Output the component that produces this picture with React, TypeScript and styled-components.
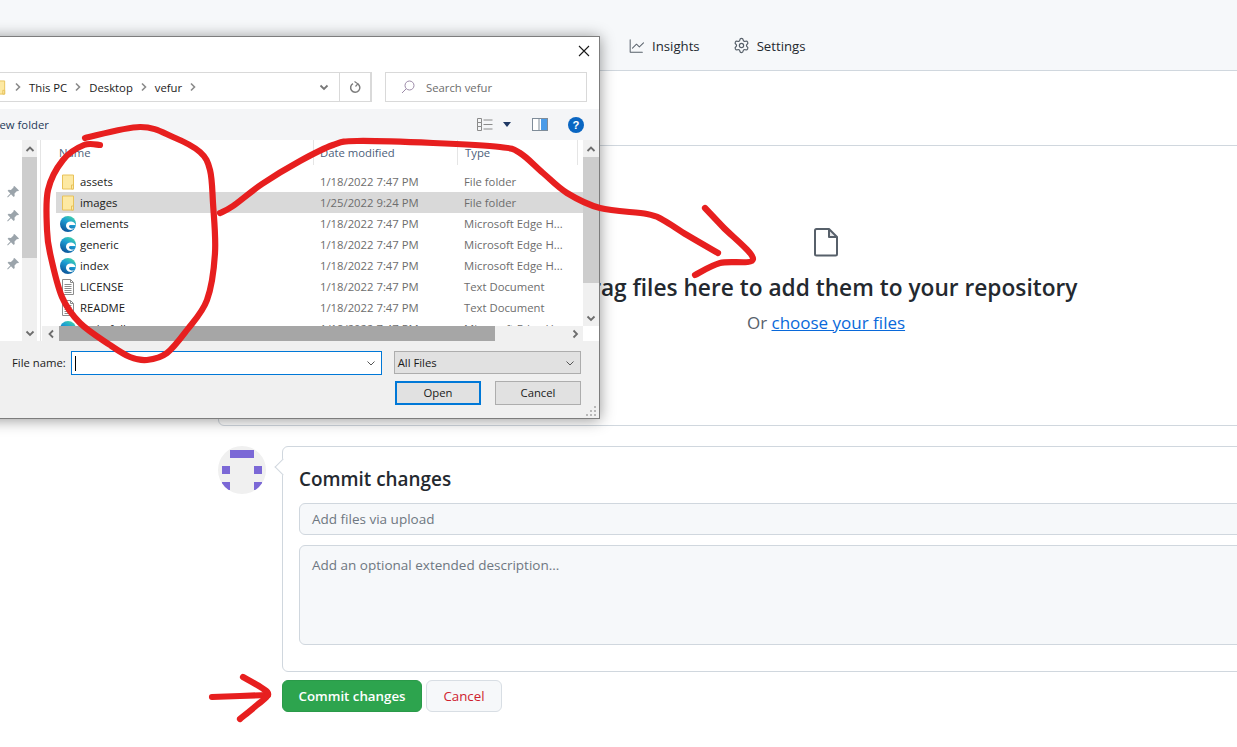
import React from "react"
import styled, { createGlobalStyle } from "styled-components"
import { GoGraph } from "react-icons/go"
import { Settings } from "lucide-react"

const GlobalStyle = createGlobalStyle`
  html, body {
    margin: 0;
    padding: 0;
    height: 100%;
    overflow: hidden;
    background: #ffffff;
  }
  * {
    box-sizing: border-box;
  }
`

const gitHubFont = `"Open Sans", "Noto Sans", sans-serif`

const Page = styled.div`
  position: relative;
  width: 1237px;
  height: 747px;
  overflow: hidden;
  font-family: ${gitHubFont};
  color: #24292f;
`

const RepoNav = styled.nav`
  display: flex;
  align-items: center;
  gap: 33px;
  height: 71px;
  padding: 21px 0 0 629px;
  background: #f6f8fa;
  border-bottom: 1px solid #d0d7de;
`

const NavItem = styled.div`
  display: flex;
  align-items: center;
  gap: 7px;
  font-size: 13.2px;
  line-height: 20px;
  white-space: nowrap;

  svg {
    color: #57606a;
    flex: none;
  }
`

const Main = styled.main`
  display: flex;
  flex-direction: column;
  width: 1216px;
  margin-left: 218px;
  padding-top: 74px;
`

const DropZone = styled.section`
  display: flex;
  flex-direction: column;
  align-items: center;
  height: 281px;
  padding-top: 81px;
  border: 1px solid #d0d7de;
  border-radius: 6px;
  margin-bottom: 20px;
`

const DropTitle = styled.h2`
  margin: 15px 0 0;
  font-size: 22.7px;
  line-height: 32px;
  font-weight: 600;
  white-space: nowrap;
`

const DropHint = styled.p`
  margin: 7px 0 0;
  font-size: 17px;
  line-height: 24px;
  color: #57606a;
`

const ChooseLink = styled.a`
  color: #0969da;
  text-decoration: underline;
`

const CommitRow = styled.div`
  display: flex;
  gap: 16px;
`

const Avatar = styled.svg`
  flex: none;
  width: 48px;
  height: 48px;
  border-radius: 50%;
  background: #f0f0f0;
`

const CommitBox = styled.form`
  position: relative;
  flex: 1;
  height: 226px;
  padding: 16px;
  border: 1px solid #d0d7de;
  border-radius: 6px;

  &::before {
    content: "";
    position: absolute;
    top: 14px;
    left: -6px;
    width: 11px;
    height: 11px;
    background: #ffffff;
    border-left: 1px solid #d0d7de;
    border-bottom: 1px solid #d0d7de;
    transform: rotate(45deg);
  }
`

const CommitTitle = styled.h3`
  margin: 0 0 8px;
  font-size: 18.9px;
  line-height: 32px;
  font-weight: 600;
`

const Field = styled.div<{ $tall?: boolean }>`
  height: ${(props) => (props.$tall ? "100px" : "32px")};
  margin-bottom: 10px;
  padding: 5px 12px;
  background: #f6f8fa;
  border: 1px solid #d0d7de;
  border-radius: 6px;
  font-size: 13.5px;
  line-height: ${(props) => (props.$tall ? "28px" : "20px")};
  color: #6e7781;
`

const Actions = styled.div`
  display: flex;
  gap: 4px;
  margin: 8px 0 0 64px;
`

const Button = styled.button<{ $primary?: boolean }>`
  height: 32px;
  width: ${(props) => (props.$primary ? "140px" : "76px")};
  padding: 0;
  font-family: ${gitHubFont};
  font-size: 13.3px;
  font-weight: ${(props) => (props.$primary ? 600 : 500)};
  color: ${(props) => (props.$primary ? "#ffffff" : "#cf222e")};
  background: ${(props) => (props.$primary ? "#2da44e" : "#f6f8fa")};
  border: 1px solid ${(props) => (props.$primary ? "#2a9a49" : "#d8dee4")};
  border-radius: 6px;
`

/* Windows file picker */

const winFont = `"Open Sans", "Noto Sans", sans-serif`

const Dialog = styled.div`
  position: absolute;
  top: 36px;
  left: -20px;
  display: flex;
  flex-direction: column;
  width: 620px;
  height: 383px;
  background: #ffffff;
  border: 1px solid #7d7d7d;
  box-shadow: 0 1px 14px rgba(0, 0, 0, 0.42);
  font-family: ${winFont};
  font-size: 11.3px;
  color: #1a1a1a;
`

const TitleBar = styled.div`
  display: flex;
  align-items: center;
  justify-content: flex-end;
  height: 35px;
  padding: 0 9px 7px 0;
  flex: none;
`

const AddressRow = styled.div`
  display: flex;
  height: 30px;
  flex: none;
`

const AddressBox = styled.div`
  display: flex;
  align-items: center;
  gap: 7px;
  width: 391px;
  padding-left: 11px;
  border-style: solid;
  border-color: #d9d9d9;
  border-width: 1px 2px 1px 0;
`

const Crumb = styled.span`
  white-space: nowrap;
`

const AddressEnd = styled.div`
  display: flex;
  align-items: center;
  height: 100%;
  margin-left: auto;
`

const AddressButton = styled.div<{ $divided?: boolean }>`
  display: flex;
  align-items: center;
  justify-content: center;
  height: 100%;
  width: ${(props) => (props.$divided ? "31px" : "30px")};
  border-left: ${(props) => (props.$divided ? "1px solid #d9d9d9" : "none")};
`

const SearchBox = styled.div`
  display: flex;
  align-items: center;
  gap: 11px;
  width: 202px;
  margin-left: 13px;
  padding-left: 15px;
  border: 1px solid #d9d9d9;
  color: #6d6d6d;
`

const Toolbar = styled.div`
  display: flex;
  align-items: center;
  height: 31px;
  margin-top: 7px;
  padding-left: 19px;
  background: #f4f5f7;
  flex: none;
  color: #243a5a;
`

const NewFolder = styled.span`
  margin-left: -9px;
  white-space: nowrap;
`

const ToolIcons = styled.div`
  display: flex;
  align-items: center;
  margin-left: auto;
  padding-right: 15px;
`

const Browser = styled.div`
  display: flex;
  height: 201px;
  flex: none;
`

const Sidebar = styled.div`
  display: flex;
  width: 60px;
  flex: none;
  border-right: 1px solid #e5e5e5;
  padding-right: 3px;
`

const Pins = styled.div`
  display: flex;
  flex-direction: column;
  align-items: flex-end;
  gap: 8px;
  width: 41px;
  padding: 44px 1px 0 0;
`

const ScrollTrack = styled.div<{ $width: number }>`
  display: flex;
  flex-direction: column;
  justify-content: space-between;
  width: ${(props) => props.$width}px;
  flex: none;
  background: #f0f0f0;
  position: relative;
`

const ScrollArrow = styled.div`
  display: flex;
  align-items: center;
  justify-content: center;
  height: 17px;
  flex: none;
`

const ScrollThumb = styled.div<{ $size: number }>`
  height: ${(props) => props.$size}px;
  background: #cdcdcd;
  flex: none;
`

const ScrollTop = styled.div`
  display: flex;
  flex-direction: column;
`

const ListArea = styled.div`
  display: flex;
  flex-direction: column;
  flex: 1;
  min-width: 0;
`

const ListTop = styled.div`
  display: flex;
  height: 186px;
`

const List = styled.div`
  flex: 1;
  padding-left: 15px;
  overflow: hidden;
`

const HeaderRow = styled.div`
  display: grid;
  grid-template-columns: 258px 144px 120px;
  height: 25px;
  margin-bottom: 6px;
  color: #4c607a;
`

const HeaderCell = styled.div<{ $pad: number }>`
  padding: 5px 0 0 ${(props) => props.$pad}px;
  border-right: 1px solid #e5e5e5;
  white-space: nowrap;
`

const FileRow = styled.div<{ $selected?: boolean }>`
  display: grid;
  grid-template-columns: 264px 144px 1fr;
  align-items: center;
  height: 21px;
  background: ${(props) => (props.$selected ? "#d9d9d9" : "transparent")};
  white-space: nowrap;
`

const FileName = styled.div`
  display: flex;
  align-items: center;
  gap: 4px;
  padding-left: 4px;
`

const FileMeta = styled.div`
  color: #6d6d6d;
`

const HScroll = styled.div`
  display: flex;
  align-items: center;
  height: 15px;
  flex: none;
`

const HTrack = styled.div`
  display: flex;
  align-items: center;
  width: 541px;
  height: 100%;
  margin-left: 1px;
  background: #f0f0f0;
`

const HArrow = styled.div<{ $end?: boolean }>`
  display: flex;
  align-items: center;
  justify-content: center;
  width: 17px;
  height: 100%;
  margin-left: ${(props) => (props.$end ? "auto" : "0")};
`

const HThumb = styled.div`
  width: 436px;
  height: 100%;
  background: #a6a6a6;
`

const Footer = styled.div`
  position: relative;
  flex: 1;
  display: flex;
  flex-direction: column;
  padding: 10px 18px 0 31px;
  background: #f0f0f0;
`

const NameRow = styled.div`
  display: flex;
  align-items: flex-start;
`

const NameLabel = styled.label`
  width: 59px;
  line-height: 24px;
  white-space: nowrap;
`

const NameInput = styled.div`
  display: flex;
  align-items: center;
  justify-content: space-between;
  width: 312px;
  height: 24px;
  padding: 0 5px 0 3px;
  background: #ffffff;
  border: 1px solid #0078d7;
`

const Caret = styled.span`
  width: 1px;
  height: 15px;
  background: #000000;
`

const TypeSelect = styled.div`
  display: flex;
  align-items: center;
  justify-content: space-between;
  width: 188px;
  height: 23px;
  margin-left: 12px;
  padding: 0 5px 0 3px;
  background: #e1e1e1;
  border: 1px solid #adadad;
`

const DialogActions = styled.div`
  display: flex;
  justify-content: flex-end;
  gap: 14px;
  margin-top: 6px;
`

const WinButton = styled.div<{ $focused?: boolean }>`
  display: flex;
  align-items: center;
  justify-content: center;
  width: 86px;
  height: 24px;
  padding-bottom: 1px;
  background: #e1e1e1;
  border: ${(props) => (props.$focused ? "2px solid #0078d7" : "1px solid #adadad")};
`

const Grip = styled.svg`
  position: absolute;
  right: 1px;
  bottom: 1px;
`

const Annotations = styled.svg`
  position: absolute;
  top: 0;
  left: 0;
  pointer-events: none;
`

/* Smooth line through the hand drawn points */
function scribble(points: number[][]): string {
  let d = `M${points[0][0]} ${points[0][1]}`
  for (let i = 0; i < points.length - 1; i++) {
    const p0 = points[Math.max(i - 1, 0)]
    const p1 = points[i]
    const p2 = points[i + 1]
    const p3 = points[Math.min(i + 2, points.length - 1)]
    const c1x = p1[0] + (p2[0] - p0[0]) / 6
    const c1y = p1[1] + (p2[1] - p0[1]) / 6
    const c2x = p2[0] - (p3[0] - p1[0]) / 6
    const c2y = p2[1] - (p3[1] - p1[1]) / 6
    d += `C${c1x} ${c1y} ${c2x} ${c2y} ${p2[0]} ${p2[1]}`
  }
  return d
}

const strokes = [
  [
    [100, 145], [84, 145], [63, 160], [48, 190], [47, 230], [50, 253], [62, 297], [80, 323],
    [110, 345], [130, 357], [147, 360], [167, 353], [187, 330], [207, 300], [215, 253],
    [213, 203], [210, 170], [200, 152], [173, 137], [140, 127], [85, 138],
  ],
  [
    [220, 213], [233, 206], [262, 184], [300, 161], [333, 145], [357, 141], [433, 143], [500, 147],
    [520, 153], [543, 173], [567, 193], [600, 208], [647, 214], [663, 220], [687, 235], [718, 253],
  ],
  [[705, 208], [723, 227], [753, 259], [720, 263], [695, 275]],
  [[212, 697], [268, 695]],
  [[243, 677], [262, 688], [268, 695], [257, 705], [240, 719]],
]

const files = [
  { name: "assets", date: "1/18/2022 7:47 PM", type: "File folder", icon: "folder" },
  { name: "images", date: "1/25/2022 9:24 PM", type: "File folder", icon: "folder", selected: true },
  { name: "elements", date: "1/18/2022 7:47 PM", type: "Microsoft Edge H...", icon: "edge" },
  { name: "generic", date: "1/18/2022 7:47 PM", type: "Microsoft Edge H...", icon: "edge" },
  { name: "index", date: "1/18/2022 7:47 PM", type: "Microsoft Edge H...", icon: "edge" },
  { name: "LICENSE", date: "1/18/2022 7:47 PM", type: "Text Document", icon: "text" },
  { name: "README", date: "1/18/2022 7:47 PM", type: "Text Document", icon: "text" },
  { name: "main.full", date: "1/18/2022 7:47 PM", type: "Microsoft Edge H...", icon: "edge" },
]

function FolderIcon({ size = 16 }: { size?: number }) {
  return (
    <svg width={size} height={size} viewBox="0 0 16 16">
      <path d="M2.5 1h11v14h-11z" fill="#fde9a3" stroke="#e8c25a" />
      <path d="M11.5 15v-4h2v4z" fill="#fbe9a9" stroke="#e8c25a" />
    </svg>
  )
}

function EdgeIcon() {
  return (
    <svg width={16} height={16} viewBox="0 0 16 16">
      <defs>
        <linearGradient id="edgeFill" x1="0.8" y1="0" x2="0.25" y2="1">
          <stop offset="0" stopColor="#45d6a4" />
          <stop offset="0.4" stopColor="#1c9fd4" />
          <stop offset="1" stopColor="#0b4f96" />
        </linearGradient>
      </defs>
      <circle cx="8" cy="8" r="8" fill="url(#edgeFill)" />
      <path d="M6 9.500C6 6.500 9 5 11.500 5.500 14 6 15.500 8 15.500 9L10.500 9C9 9 8.500 10.500 9.500 11.500 10.500 12.500 12.500 13 14.300 12 13 14 10.500 14.500 8.500 13.500 6.800 12.700 6 11.200 6 9.500Z" fill="#ffffff" />
    </svg>
  )
}

function TextIcon() {
  return (
    <svg width={16} height={16} viewBox="0 0 16 16" fill="none" stroke="#8c8c8c">
      <path d="M2.5 0.5h8l3 3v12h-11z" fill="#ffffff" />
      <path d="M10.5 0.500v3h3" />
      <path d="M4.500 5.500h7M4.500 7.500h7M4.500 9.500h7M4.500 11.500h7M4.500 13.500h7" />
    </svg>
  )
}

function FileIcon({ kind }: { kind: string }) {
  if (kind === "folder") return <FolderIcon />
  if (kind === "edge") return <EdgeIcon />
  return <TextIcon />
}

function ChevronRight() {
  return (
    <svg width={8} height={10} viewBox="0 0 8 10" fill="none" stroke="#8a8a8a" strokeWidth="1.6" style={{ flex: "none" }}>
      <path d="M2 1.5L5.5 5 2 8.5" />
    </svg>
  )
}

function Chevron({ dir, color = "#6d6d6d", width = 1.8 }: { dir: "up" | "down" | "left" | "right"; color?: string; width?: number }) {
  const shapes = {
    up: "M1.5 7L5 3.5 8.5 7",
    down: "M1.5 3.5L5 7 8.5 3.5",
    left: "M7 1.5L3.5 5 7 8.5",
    right: "M3.5 1.5L7 5 3.5 8.5",
  }
  return (
    <svg width={10} height={10} viewBox="0 0 10 10" fill="none" stroke={color} strokeWidth={width}>
      <path d={shapes[dir]} />
    </svg>
  )
}

function Pin() {
  return (
    <svg width={16} height={16} viewBox="0 0 16 16" fill="#9ba4ab">
      <path d="M9.500 2l4.500 4.500-1 .8-1-.3-2.500 2.600.2 2.300-1 1L6 10.200 2.800 13.400 2.200 12.800 5.300 9.500 2.600 6.800l1-1 2.300.2L8.500 3.400 8.300 2.800z" />
    </svg>
  )
}

function FilePicker() {
  return (
    <Dialog>
      <TitleBar>
        <svg width={12} height={12} viewBox="0 0 12 12" stroke="#1a1a1a" strokeWidth="1.1">
          <path d="M1 1l10 10M11 1L1 11" />
        </svg>
      </TitleBar>
      <AddressRow>
        <AddressBox>
          <FolderIcon size={15} />
          <ChevronRight />
          <Crumb>This PC</Crumb>
          <ChevronRight />
          <Crumb>Desktop</Crumb>
          <ChevronRight />
          <Crumb>vefur</Crumb>
          <ChevronRight />
          <AddressEnd>
            <AddressButton>
              <Chevron dir="down" color="#777777" />
            </AddressButton>
            <AddressButton $divided>
              <svg width={13} height={13} viewBox="0 0 13 13" fill="none" stroke="#7d7d7d" strokeWidth="1.5">
                <path d="M8.800 2.800A4.600 4.600 0 1 1 4 2.600" />
                <path d="M5.500 0.500L8.800 2.800 6.500 5.500" strokeWidth="1.2" />
              </svg>
            </AddressButton>
          </AddressEnd>
        </AddressBox>
        <SearchBox>
          <svg width={14} height={14} viewBox="0 0 14 14" fill="none" stroke="#9c8aa8" strokeWidth="1">
            <circle cx="8.500" cy="5.500" r="4.500" />
            <path d="M5.200 8.800L1 13" />
          </svg>
          <span>Search vefur</span>
        </SearchBox>
      </AddressRow>
      <Toolbar>
        <NewFolder>New folder</NewFolder>
        <ToolIcons>
          <svg width={16} height={14} viewBox="0 0 16 14" fill="none" stroke="#8a8a8a">
            <path d="M0.500 0.500h4v4h-4zM0.500 4.500h4v4h-4zM0.500 8.500h4v4h-4zM6.500 2h9M6.500 6.500h9M6.500 11h9" />
          </svg>
          <svg width={8} height={5} viewBox="0 0 8 5" style={{ margin: "0 21px 0 10px" }}>
            <path d="M0 0h8L4 5z" fill="#1f3864" />
          </svg>
          <svg width={16} height={13} viewBox="0 0 16 13" style={{ marginRight: 20 }}>
            <rect x="0.500" y="0.500" width="15" height="12" fill="#ffffff" stroke="#7f8c99" />
            <rect x="9" y="1" width="6" height="11" fill="#4a9be8" />
            <path d="M7 1v11" stroke="#7f8c99" />
          </svg>
          <svg width={16} height={16} viewBox="0 0 17 17">
            <circle cx="8.500" cy="8.500" r="8.500" fill="#0a66c2" />
            <text x="8.500" y="13" textAnchor="middle" fontSize="12" fontWeight="700" fill="#ffffff" fontFamily="Liberation Sans, sans-serif">?</text>
          </svg>
        </ToolIcons>
      </Toolbar>
      <Browser>
        <Sidebar>
          <Pins>
            <Pin />
            <Pin />
            <Pin />
            <Pin />
          </Pins>
          <ScrollTrack $width={15}>
            <ScrollTop>
              <ScrollArrow>
                <Chevron dir="up" />
              </ScrollArrow>
              <ScrollThumb $size={101} />
            </ScrollTop>
            <ScrollArrow>
              <Chevron dir="down" />
            </ScrollArrow>
          </ScrollTrack>
        </Sidebar>
        <ListArea>
          <ListTop>
            <List>
              <HeaderRow>
                <HeaderCell $pad={3}>Name</HeaderCell>
                <HeaderCell $pad={6}>Date modified</HeaderCell>
                <HeaderCell $pad={7}>Type</HeaderCell>
              </HeaderRow>
              {files.map((file) => (
                <FileRow key={file.name} $selected={file.selected}>
                  <FileName>
                    <FileIcon kind={file.icon} />
                    <span>{file.name}</span>
                  </FileName>
                  <FileMeta>{file.date}</FileMeta>
                  <FileMeta>{file.type}</FileMeta>
                </FileRow>
              ))}
            </List>
            <ScrollTrack $width={16}>
              <ScrollTop>
                <ScrollArrow>
                  <Chevron dir="up" />
                </ScrollArrow>
                <ScrollThumb $size={126} />
              </ScrollTop>
              <ScrollArrow>
                <Chevron dir="down" />
              </ScrollArrow>
            </ScrollTrack>
          </ListTop>
          <HScroll>
            <HTrack>
              <HArrow>
                <Chevron dir="left" />
              </HArrow>
              <HThumb />
              <HArrow $end>
                <Chevron dir="right" />
              </HArrow>
            </HTrack>
          </HScroll>
        </ListArea>
      </Browser>
      <Footer>
        <NameRow>
          <NameLabel>File name:</NameLabel>
          <NameInput>
            <Caret />
            <Chevron dir="down" color="#555555" width={1} />
          </NameInput>
          <TypeSelect>
            <span>All Files</span>
            <Chevron dir="down" color="#555555" width={1} />
          </TypeSelect>
        </NameRow>
        <DialogActions>
          <WinButton $focused>Open</WinButton>
          <WinButton>Cancel</WinButton>
        </DialogActions>
        <Grip width={12} height={12} viewBox="0 0 12 12" fill="#b8b8b8">
          <path d="M8 1h2v2H8zM4 5h2v2H4zM8 5h2v2H8zM0 9h2v2H0zM4 9h2v2H4zM8 9h2v2H8z" />
        </Grip>
      </Footer>
    </Dialog>
  )
}

export default function App() {
  return (
    <Page>
      <GlobalStyle />
      <RepoNav>
        <NavItem>
          <GoGraph size={16} />
          Insights
        </NavItem>
        <NavItem>
          <Settings size={17} strokeWidth={1.7} />
          Settings
        </NavItem>
      </RepoNav>
      <Main>
        <DropZone>
          <svg width={26} height={30} viewBox="0 0 26 30" fill="none" stroke="#57606a" strokeWidth="2" strokeLinejoin="round">
            <path d="M3.500 2h12.500l8 8v17a1.500 1.500 0 0 1-1.500 1.500h-19A1.500 1.500 0 0 1 2 27V3.500A1.500 1.500 0 0 1 3.500 2z" />
            <path d="M16 2v8h8" fill="#57606a" fillOpacity="0.15" />
          </svg>
          <DropTitle>Drag files here to add them to your repository</DropTitle>
          <DropHint>
            Or <ChooseLink href="#">choose your files</ChooseLink>
          </DropHint>
        </DropZone>
        <CommitRow>
          <Avatar viewBox="0 0 48 48">
            <g fill="#7b68d6">
              <rect x="12" y="4" width="24" height="8" />
              <rect x="4" y="20" width="8" height="8" />
              <rect x="36" y="20" width="8" height="8" />
              <rect x="4" y="36" width="8" height="8" />
              <rect x="36" y="36" width="8" height="8" />
            </g>
          </Avatar>
          <CommitBox>
            <CommitTitle>Commit changes</CommitTitle>
            <Field>Add files via upload</Field>
            <Field $tall>Add an optional extended description...</Field>
          </CommitBox>
        </CommitRow>
        <Actions>
          <Button $primary type="button">Commit changes</Button>
          <Button type="button">Cancel</Button>
        </Actions>
      </Main>
      <FilePicker />
      <Annotations width={1237} height={747} viewBox="0 0 1237 747" fill="none" stroke="#e71f1f" strokeWidth="6.200" strokeLinecap="round" strokeLinejoin="round">
        {strokes.map((points, i) => (
          <path key={i} d={scribble(points)} />
        ))}
      </Annotations>
    </Page>
  )
}
